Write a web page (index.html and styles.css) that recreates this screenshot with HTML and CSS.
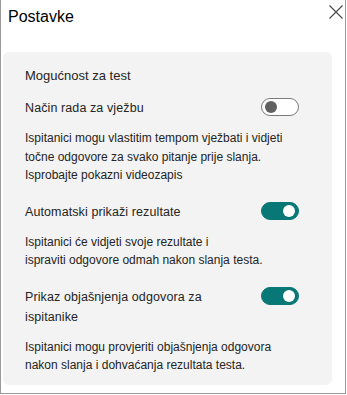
FILE: index.html
```html
<!DOCTYPE html>
<html lang="hr">
  <head>
    <meta charset="UTF-8" />
    <meta name="viewport" content="width=device-width, initial-scale=1.0" />
    <title>Postavke</title>
    <link rel="stylesheet" href="styles.css">
  </head>
  <body>
    <div class="dialog">
      <header class="dialog-header">
        <h1 class="dialog-title">Postavke</h1>
        <button class="close-button" aria-label="Zatvori">
          <svg width="16" height="16" viewBox="0 0 16 16">
            <path d="M1.5 1.5 L14.5 14.5 M14.5 1.5 L1.5 14.5" stroke="#4a4a4a" stroke-width="1.2" fill="none" />
          </svg>
        </button>
      </header>

      <section class="panel">
        <h2 class="panel-title">Mogućnost za test</h2>

        <div class="setting">
          <div class="setting-head">
            <span class="setting-label">Način rada za vježbu</span>
            <span class="toggle"></span>
          </div>
          <p class="setting-desc">
            Ispitanici mogu vlastitim tempom vježbati i vidjeti
            točne odgovore za svako pitanje prije slanja.
            Isprobajte pokazni videozapis
          </p>
        </div>

        <div class="setting">
          <div class="setting-head">
            <span class="setting-label">Automatski prikaži rezultate</span>
            <span class="toggle on"></span>
          </div>
          <p class="setting-desc">
            Ispitanici će vidjeti svoje rezultate i<br>
            ispraviti odgovore odmah nakon slanja testa.
          </p>
        </div>

        <div class="setting">
          <div class="setting-head">
            <span class="setting-label">Prikaz objašnjenja odgovora za ispitanike</span>
            <span class="toggle on"></span>
          </div>
          <p class="setting-desc">
            Ispitanici mogu provjeriti objašnjenja odgovora
            nakon slanja i dohvaćanja rezultata testa.
          </p>
        </div>
      </section>
    </div>
  </body>
</html>
```

FILE: styles.css
```css
* {
  margin: 0;
  padding: 0;
  box-sizing: border-box;
}

:root {
  --text-color: #242424;
  --panel-bg: #f3f3f3;
  --accent-color: #077876;
  --frame-color: #9a9a9a;
}

body {
  font-family: "Liberation Sans", Arial, sans-serif;
  color: var(--text-color);
  background: #ffffff;
}

.dialog {
  width: 346px;
  height: 394px;
  border: 1px solid var(--frame-color);
  border-top: none;
  padding: 0 13px 0 2px;
}

.dialog-header {
  display: flex;
  justify-content: space-between;
  align-items: flex-start;
  height: 52px;
}

.dialog-title {
  font-size: 16px;
  font-weight: normal;
  color: #000;
  padding: 8px 0 0 5px;
}

.close-button {
  background: none;
  border: none;
  margin: 4px -12px 0 0;
  width: 16px;
  height: 16px;
}

.panel {
  background: var(--panel-bg);
  border-radius: 6px;
  height: 333px;
  padding: 16px 33px 0 22px;
}

.panel-title {
  font-size: 13px;
  font-weight: normal;
  line-height: 16px;
  margin-bottom: 14px;
}

.setting {
  margin-bottom: 17px;
}

.setting-head {
  display: flex;
  justify-content: space-between;
  align-items: flex-start;
  gap: 20px;
}

.setting-label {
  font-size: 12.5px;
  line-height: 20px;
  letter-spacing: 0.1px;
}

.setting-desc {
  font-size: 12px;
  line-height: 18.5px;
  margin-top: 11px;
}

.toggle {
  flex: 0 0 38px;
  height: 18px;
  border: 1px solid #7a7a7a;
  border-radius: 9px;
  background: #fff;
  position: relative;
}

.toggle::after {
  content: "";
  position: absolute;
  top: 2px;
  left: 3px;
  width: 12px;
  height: 12px;
  border-radius: 50%;
  background: #616161;
}

.toggle.on {
  background: var(--accent-color);
  border-color: var(--accent-color);
}

.toggle.on::after {
  left: auto;
  right: 3px;
  background: #fff;
}
```
